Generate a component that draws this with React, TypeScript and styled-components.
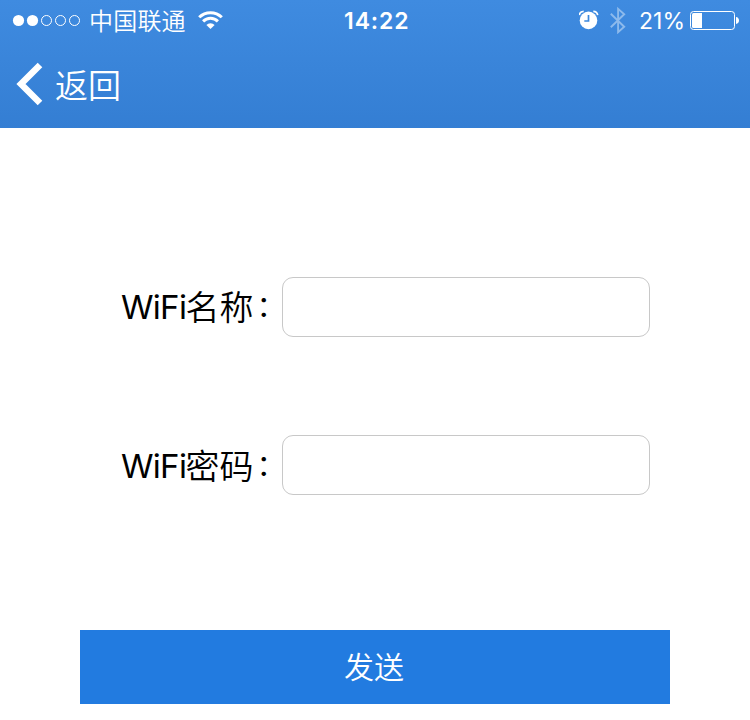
import React from "react";
import styled, { createGlobalStyle } from "styled-components";

const GlobalStyle = createGlobalStyle`
  * { box-sizing: border-box; }
  body { margin: 0; background: #fff; }
`;

const Screen = styled.div`
  width: 750px;
  height: 720px;
  overflow: hidden;
  background: #fff;
  color: #000;
  font-family: Inter, "Noto Sans CJK SC", sans-serif;
`;

const Header = styled.header`
  height: 128px;
  color: #fff;
  background: linear-gradient(#3f8be0, #347ed3);
`;

const StatusBar = styled.div`
  height: 40px;
  padding: 0 11px 0 12px;
  display: grid;
  grid-template-columns: 332px 1fr auto;
  font-size: 24px;
  line-height: 40px;
`;

const StatusGroup = styled.div`
  display: flex;
  align-items: center;
  height: 40px;
`;

const Signal = styled.svg`
  display: block;
  margin-right: 8px;
`;

const Carrier = styled.span`
  width: 98px;
  font-family: "Noto Sans CJK SC", sans-serif;
  font-weight: 350;
  line-height: 40px;
  letter-spacing: 0.2px;
  white-space: nowrap;
`;

const WifiIcon = styled.svg`
  display: block;
  margin-left: 11px;
`;

const Clock = styled.time`
  font-size: 23px;
  font-weight: 600;
  letter-spacing: 0.9px;
  line-height: 42px;
`;

const AlarmIcon = styled.svg`
  display: block;
  margin-right: 11px;
`;

const BluetoothIcon = styled.svg`
  display: block;
  margin-right: 13px;
`;

const Percent = styled.span`
  width: 51px;
  font-size: 23px;
  line-height: 42px;
  padding-top: 1px;
`;

const BackButton = styled.button`
  display: flex;
  align-items: center;
  height: 88px;
  padding: 0 0 0 16px;
  border: 0;
  background: none;
  color: inherit;
  font: 350 33px/88px "Noto Sans CJK SC", sans-serif;
`;

const BackIcon = styled.svg`
  display: block;
  margin-right: 12px;
`;

const Form = styled.form`
  padding-top: 149px;
`;

const Field = styled.label`
  display: flex;
  align-items: center;
  height: 60px;
  padding-left: 121px;
  margin-bottom: 98px;
`;

const Label = styled.span<{ $drop: number }>`
  display: flex;
  width: 161px;
  height: 60px;
  padding-top: ${(p) => p.$drop}px;
  font-size: 34px;
  line-height: 60px;
  white-space: nowrap;
`;

const Latin = styled.span`
  width: 64.5px;
  font-size: 33px;
  letter-spacing: -0.7px;
`;

const Chinese = styled.span`
  font-family: "Noto Sans CJK SC", sans-serif;
  font-weight: 350;
  line-height: 58px;
`;

const Colon = styled.span`
  font-family: "Noto Sans CJK SC", sans-serif;
  font-size: 29px;
  line-height: 54px;
  padding-left: 3px;
`;

const Input = styled.input`
  width: 368px;
  height: 60px;
  padding: 0 14px;
  border: 1px solid #c8c8c8;
  border-radius: 11px;
  background: #fff;
  font: inherit;
  font-size: 30px;
  outline: none;
`;

const SendButton = styled.button`
  display: block;
  width: 590px;
  height: 74px;
  margin: 135px 0 0 80px;
  padding: 0 2px 3px 0;
  border: 0;
  background: #227be0;
  color: #fff;
  font: 350 30px/71px "Noto Sans CJK SC", sans-serif;
`;

const fields = [
  { name: "名称", type: "text", drop: 0 },
  { name: "密码", type: "password", drop: 1 },
];

export default function App() {
  return (
    <Screen>
      <GlobalStyle />
      <Header>
        <StatusBar>
          <StatusGroup>
            <Signal width="69" height="14" viewBox="0 0 69 14">
              <circle cx="6.5" cy="7.5" r="5.6" fill="#fff" />
              <circle cx="20.5" cy="7.5" r="5.6" fill="#fff" />
              {[34.5, 48.5, 62.5].map((x) => (
                <circle key={x} cx={x} cy="7.5" r="5" fill="none" stroke="#fff" />
              ))}
            </Signal>
            <Carrier>中国联通</Carrier>
            <WifiIcon width="25" height="20" viewBox="0 0 25 20" fill="none" stroke="#fff" strokeWidth="3">
              <path d="M1.2 7.3a16 16 0 0 1 22.6 0" />
              <path d="M5.1 11.4a10.4 10.4 0 0 1 14.8 0" />
              <path d="M8.4 14.9a5.8 5.8 0 0 1 8.2 0L12.5 19Z" fill="#fff" stroke="none" />
            </WifiIcon>
          </StatusGroup>
          <Clock>14:22</Clock>
          <StatusGroup>
            <AlarmIcon width="20" height="20" viewBox="0 0 20 20">
              <circle cx="9.5" cy="10.4" r="8.8" fill="#fff" />
              <path d="M.3 4.6Q.8 .9 4.7 .8M14.3 .8q3.9.2 4.4 3.8" transform="translate(0 .5)" fill="none" stroke="#fff" strokeWidth="1.7" />
              <path d="M9.5 5v6H5.3" fill="none" stroke="#3c88dd" strokeWidth="1.7" />
            </AlarmIcon>
            <BluetoothIcon width="16" height="28" viewBox="0 0 16 28" fill="none" stroke="#8dbaec" strokeWidth="1.9">
              <path d="m.8 7.7 13.4 13.1-6.1 5.4V2.8l6.1 5.4L.8 21.3" />
            </BluetoothIcon>
            <Percent>21%</Percent>
            <svg width="49" height="20" viewBox="0 0 49 20">
              <rect x=".5" y="1.5" width="44" height="18" rx="3" fill="none" stroke="#fff" />
              <path d="M3.5 3H12v15H3.5A1.5 1.5 0 0 1 2 16.5v-12A1.5 1.5 0 0 1 3.5 3Z" fill="#fff" />
              <path d="M46 7c4 .3 4 6.7 0 7Z" fill="#fff" />
            </svg>
          </StatusGroup>
        </StatusBar>
        <BackButton type="button">
          <BackIcon width="27" height="44" viewBox="0 0 27 44">
            <path d="m24 3-19 19 19 19" fill="none" stroke="#fff" strokeWidth="6.5" />
          </BackIcon>
          返回
        </BackButton>
      </Header>
      <Form>
        {fields.map((field) => (
          <Field key={field.name}>
            <Label $drop={field.drop}>
              <Latin>WiFi</Latin>
              <Chinese>{field.name}</Chinese>
              <Colon>：</Colon>
            </Label>
            <Input type={field.type} />
          </Field>
        ))}
        <SendButton type="button">发送</SendButton>
      </Form>
    </Screen>
  );
}
